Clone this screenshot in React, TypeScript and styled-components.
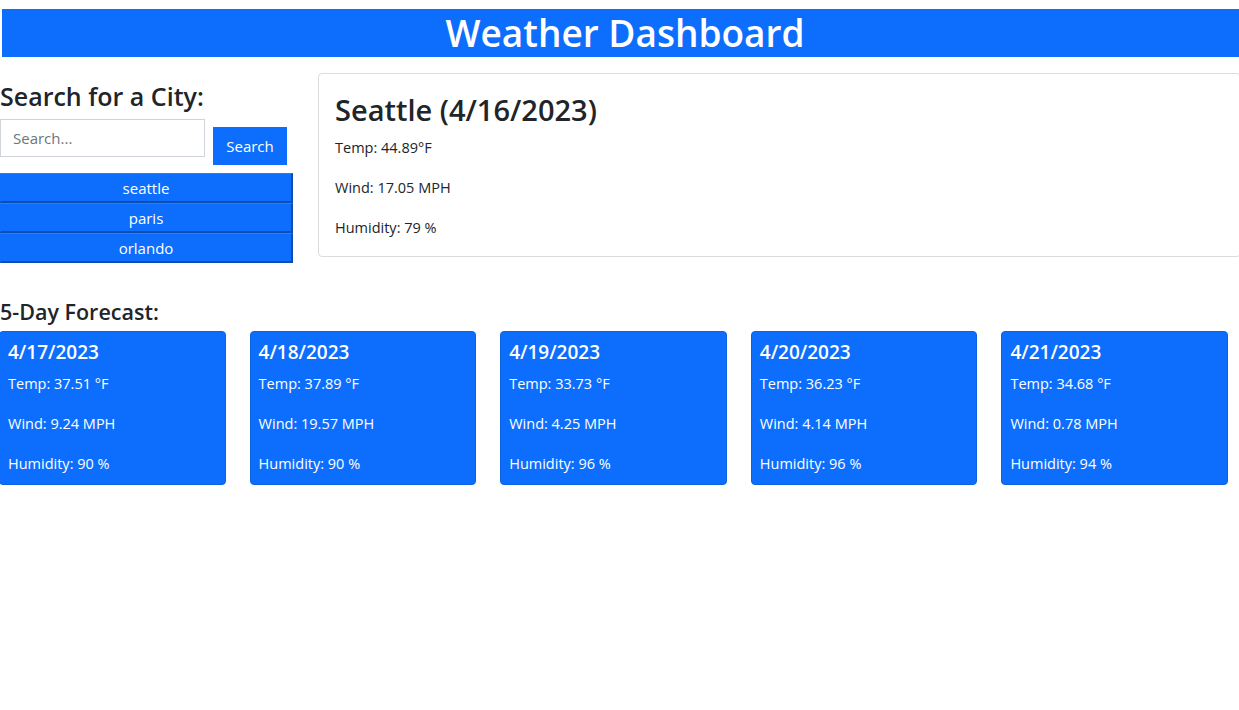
import React from "react";
import styled, { createGlobalStyle } from "styled-components";

const GlobalStyle = createGlobalStyle`
  html, body {
    margin: 0;
    padding: 0;
    background: #fff;
    overflow-x: hidden;
  }
  body {
    font-family: "Open Sans", "Noto Sans", sans-serif;
    font-size: 16px;
    line-height: 1.5;
    color: #212529;
  }
  * { box-sizing: border-box; }
`;

const Header = styled.h1`
  margin: 9px 0 0 2px;
  width: calc(100% + 7px);
  height: 48px;
  background: #0d6efd;
  color: #fff;
  text-align: center;
  font-size: 37px;
  font-weight: 600;
  line-height: 48px;
`;

const Main = styled.main`
  display: flex;
  align-items: flex-start;
  gap: 25px;
  margin-top: 16px;
`;

const Sidebar = styled.aside`
  width: 293px;
  flex-shrink: 0;
  padding-top: 8px;
`;

const SideTitle = styled.h3`
  margin: 0 0 8px;
  font-size: 25px;
  font-weight: 600;
  line-height: 1.2;
  white-space: nowrap;
`;

const SearchRow = styled.div`
  display: flex;
  align-items: flex-start;
  gap: 8px;
`;

const SearchInput = styled.input`
  width: 205px;
  height: 38px;
  padding: 6px 12px;
  border: 1px solid #ced4da;
  border-radius: 0;
  font-family: inherit;
  font-size: 15px;
  color: #212529;
  &::placeholder { color: #6c757d; }
`;

const SearchButton = styled.button`
  margin-top: 8px;
  width: 74px;
  height: 38px;
  border: none;
  background: #0d6efd;
  color: #fff;
  font-family: inherit;
  font-size: 15px;
`;

const CityList = styled.div`
  display: flex;
  flex-direction: column;
  margin-top: 8px;
`;

const CityButton = styled.button`
  width: 293px;
  height: 30px;
  padding: 0;
  background: #0d6efd;
  color: #fff;
  border-style: solid;
  border-width: 1px 2px 2px 1px;
  border-color: #2a7efd #0a4db3 #0a4db3 #0d6efd;
  font-family: inherit;
  font-size: 15px;
  line-height: 26px;
`;

const CurrentCard = styled.section`
  flex: 1;
  margin-right: -2px;
  padding: 17px 16px 16px;
  border: 1px solid #dcdcdc;
  border-radius: 4px;
`;

const CityTitle = styled.h2`
  margin: 0 0 7px;
  font-size: 29px;
  font-weight: 600;
  line-height: 38px;
`;

const Stat = styled.p<{ $last?: boolean }>`
  margin: 0 0 ${(p) => (p.$last ? "0" : "16px")};
  font-size: 14.5px;
  line-height: 24px;
`;

const ForecastTitle = styled.h4`
  margin: 34px 0 5px;
  font-size: 21.5px;
  font-weight: 600;
  line-height: 29px;
`;

const ForecastGrid = styled.div`
  display: grid;
  grid-template-columns: repeat(5, 1fr);
  column-gap: 24px;
  width: 1229px;
  margin-left: -1px;
`;

const DayCard = styled.div`
  height: 154px;
  padding: 8px 7px 8px 8px;
  background: #0d6efd;
  color: #fff;
  border: 1px solid #0b63e0;
  border-radius: 4px;
`;

const DayDate = styled.h5`
  margin: 0 0 8px;
  font-size: 19px;
  font-weight: 600;
  line-height: 24px;
`;

const forecast = [
  { date: "4/17/2023", temp: "37.51", wind: "9.24", hum: "90" },
  { date: "4/18/2023", temp: "37.89", wind: "19.57", hum: "90" },
  { date: "4/19/2023", temp: "33.73", wind: "4.25", hum: "96" },
  { date: "4/20/2023", temp: "36.23", wind: "4.14", hum: "96" },
  { date: "4/21/2023", temp: "34.68", wind: "0.78", hum: "94" },
];

export default function App() {
  return (
    <>
      <GlobalStyle />
      <Header>Weather Dashboard</Header>
      <Main>
        <Sidebar>
          <SideTitle>Search for a City:</SideTitle>
          <SearchRow>
            <SearchInput placeholder="Search..." />
            <SearchButton>Search</SearchButton>
          </SearchRow>
          <CityList>
            {["seattle", "paris", "orlando"].map((c) => (
              <CityButton key={c}>{c}</CityButton>
            ))}
          </CityList>
        </Sidebar>
        <CurrentCard>
          <CityTitle>Seattle (4/16/2023)</CityTitle>
          <Stat>Temp: 44.89°F</Stat>
          <Stat>Wind: 17.05 MPH</Stat>
          <Stat $last>Humidity: 79 %</Stat>
        </CurrentCard>
      </Main>
      <ForecastTitle>5-Day Forecast:</ForecastTitle>
      <ForecastGrid>
        {forecast.map((d) => (
          <DayCard key={d.date}>
            <DayDate>{d.date}</DayDate>
            <Stat>Temp: {d.temp} °F</Stat>
            <Stat>Wind: {d.wind} MPH</Stat>
            <Stat $last>Humidity: {d.hum} %</Stat>
          </DayCard>
        ))}
      </ForecastGrid>
    </>
  );
}
